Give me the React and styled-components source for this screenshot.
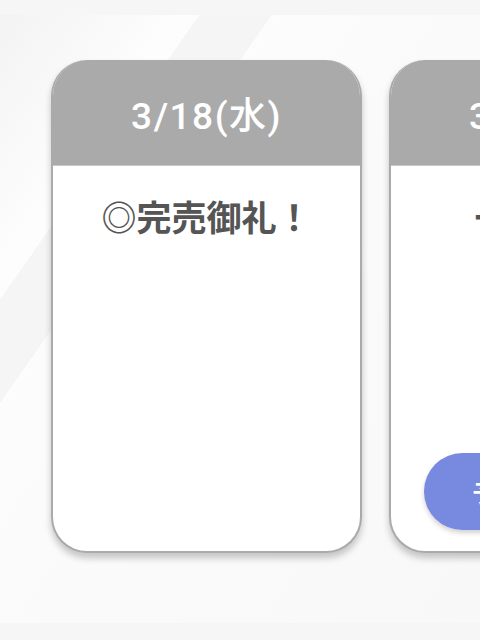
import React from "react"
import styled, { createGlobalStyle } from "styled-components"

const GlobalStyle = createGlobalStyle`
  html, body {
    margin: 0;
    padding: 0;
    background: #f5f5f5;
    font-family: "Noto Sans CJK JP", "Noto Sans", sans-serif;
  }
`

const Page = styled.div`
  width: 480px;
  height: 640px;
  overflow: hidden;
  background: #f6f6f6;
  padding-top: 15px;
  box-sizing: border-box;
`

const Stage = styled.section`
  height: 608px;
  overflow: hidden;
  background:
    linear-gradient(125deg, rgba(0,0,0,0) 0 22%, rgba(240,240,240,0.6) 22% 30%, rgba(0,0,0,0) 30%),
    linear-gradient(125deg, #f3f3f3 0%, #fdfdfd 20%, #fafafa 55%, #f8f8f8 100%);
  display: flex;
  gap: 27px;
  padding: 45px 0 0 51px;
  box-sizing: border-box;
`

const Card = styled.article`
  flex: 0 0 311px;
  height: 493px;
  border-radius: 36px;
  background: #fff;
  border: 2px solid #aaa;
  border-top: none;
  box-sizing: border-box;
  box-shadow: 0 5px 7px rgba(0, 0, 0, 0.22);
  display: flex;
  flex-direction: column;
  overflow: hidden;
`

const Header = styled.header`
  height: 106px;
  background: #aaa;
  margin: 0 -2px;
  color: #fff;
  font-family: Roboto, "Noto Sans CJK JP", sans-serif;
  font-size: 37px;
  font-weight: 500;
  display: flex;
  align-items: center;
  justify-content: center;
  letter-spacing: 1.5px;
  box-sizing: border-box;
  border-bottom: 1px solid #c8c8c8;
`

const Body = styled.div`
  flex: 1;
  display: flex;
  flex-direction: column;
  align-items: center;
  padding: 29px 0 21px;
`

const Note = styled.p`
  margin: 0;
  font-size: 35px;
  font-weight: 700;
  color: #555;
  line-height: 1.2;
`

const Reserve = styled.button`
  margin-top: auto;
  width: 241px;
  height: 77px;
  border: none;
  border-radius: 39px;
  background: #7889e0;
  color: #fff;
  font-family: inherit;
  font-size: 24px;
  font-weight: 700;
  box-shadow: 0 3px 5px rgba(0, 0, 0, 0.18);
`

const days = [
  { date: "3/18(水)", note: "◎完売御礼！" },
  { date: "3/19(木)", note: "一般受付", button: "予約はこちら" },
]

export default function App() {
  return (
    <>
      <GlobalStyle />
      <Page>
        <Stage>
          {days.map(d => (
            <Card key={d.date}>
              <Header>{d.date}</Header>
              <Body>
                <Note>{d.note}</Note>
                {d.button && <Reserve>{d.button}</Reserve>}
              </Body>
            </Card>
          ))}
        </Stage>
      </Page>
    </>
  )
}
